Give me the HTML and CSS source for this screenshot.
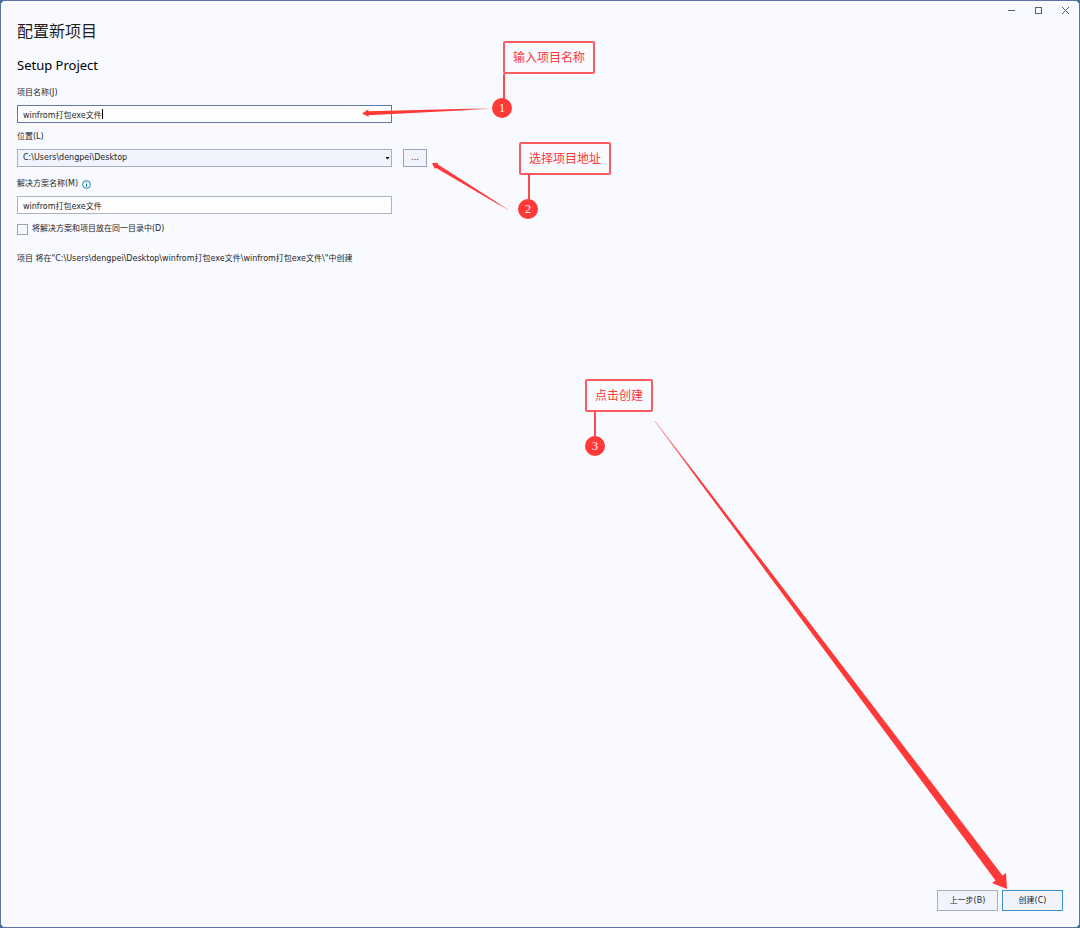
FILE: index.html
```html
<!DOCTYPE html>
<html lang="zh-CN">
<head>
    <meta charset="UTF-8">
    <meta name="viewport" content="width=device-width, initial-scale=1.0">
    <title>配置新项目</title>
    <link rel="stylesheet" href="styles.css">
</head>
<body>
    <div class="window">
        <header class="titlebar">
            <button class="win-btn" type="button" aria-label="最小化">
                <svg width="9" height="9" viewBox="0 0 9 9"><path d="M1 4.5h7"/></svg>
            </button>
            <button class="win-btn" type="button" aria-label="最大化">
                <svg width="9" height="9" viewBox="0 0 9 9"><rect x="1.5" y="1.5" width="6" height="6"/></svg>
            </button>
            <button class="win-btn" type="button" aria-label="关闭">
                <svg width="9" height="9" viewBox="0 0 9 9"><path d="M1 1l7 7M8 1l-7 7"/></svg>
            </button>
        </header>
        <form class="content">
            <h1>配置新项目</h1>
            <h2>Setup Project</h2>
            <div class="field">
                <label for="name">项目名称(J)</label>
                <div class="control">
                    <input class="box active" type="text" id="name" value="winfrom打包exe文件">
                    <span class="caret"></span>
                </div>
            </div>
            <div class="field location">
                <label for="location">位置(L)</label>
                <div class="row">
                    <div class="control">
                        <select class="box" id="location">
                            <option>C:\Users\dengpei\Desktop</option>
                        </select>
                        <svg class="arrow" width="5" height="3" viewBox="0 0 5 3"><path d="M.5 0h4L2.5 2.5z"/></svg>
                    </div>
                    <button class="browse" type="button">...</button>
                </div>
            </div>
            <div class="field">
                <label for="solution">解决方案名称(M)
                    <svg class="info" width="9" height="9" viewBox="0 0 9 9">
                        <circle cx="4.5" cy="4.5" r="3.9"/>
                        <path d="M4.5 2v1M4.5 3.8v3.2"/>
                    </svg>
                </label>
                <div class="control">
                    <input class="box" type="text" id="solution" value="winfrom打包exe文件">
                </div>
            </div>
            <label class="check"><input type="checkbox">将解决方案和项目放在同一目录中(D)</label>
            <p class="summary">项目 将在"C:\Users\dengpei\Desktop\winfrom打包exe文件\winfrom打包exe文件\"中创建</p>
        </form>
        <footer class="footer">
            <button type="button">上一步(B)</button>
            <button class="primary" type="button">创建(C)</button>
        </footer>
    </div>

    <!-- step notes on top of the dialog -->
    <svg class="pointer pointer-1" width="128" height="12" viewBox="0 0 128 12">
        <defs>
            <linearGradient id="fade1" x1="1" x2="0" y1="0" y2="0">
                <stop offset="0" stop-color="#ff3838" stop-opacity="0.3"/>
                <stop offset="0.2" stop-color="#ff3838"/>
            </linearGradient>
        </defs>
        <path fill="url(#fade1)" d="M0 6.5L6.5 2.2L6.2 4.2L127 1.2V2L6.2 8.2L7 10z"/>
    </svg>
    <svg class="pointer pointer-2" width="78" height="50" viewBox="0 0 78 50">
        <defs>
            <linearGradient id="fade2" x1="1" x2="0" y1="1" y2="0">
                <stop offset="0" stop-color="#ff3838" stop-opacity="0.3"/>
                <stop offset="0.2" stop-color="#ff3838"/>
            </linearGradient>
        </defs>
        <path fill="url(#fade2)" d="M0 1L6 1L5.6 2.3L77 48L76.6 48.6L3.8 5.8L2.8 7z"/>
    </svg>
    <svg class="pointer pointer-3" width="354" height="470" viewBox="0 0 354 470">
        <defs>
            <linearGradient id="fade3" x1="0" x2="1" y1="0" y2="1">
                <stop offset="0" stop-color="#ff3838" stop-opacity="0.4"/>
                <stop offset="0.12" stop-color="#ff3838"/>
            </linearGradient>
        </defs>
        <path fill="url(#fade3)" d="M1.4 1L348.5 455.5L352 453L353 469L338 463L341.5 460.5L0.6 1.6z"/>
    </svg>
    <div class="note note-1"><p>输入项目名称</p><b>1</b></div>
    <div class="note note-2"><p>选择项目地址</p><b>2</b></div>
    <div class="note note-3"><p>点击创建</p><b>3</b></div>
</body>
</html>
```
FILE: styles.css
```css
* {
    box-sizing: border-box;
}
body {
    position: relative;
    margin: 0;
    background: #3f7189;
    color: #1e1e1e;
    font-family: "DejaVu Sans", "Noto Sans CJK SC", sans-serif;
    font-size: 8px;
    line-height: 12px;
}
.window {
    display: flex;
    flex-direction: column;
    min-height: 100vh;
    border: 1px solid #5d73a5;
    border-radius: 5px;
    background: #f8faff;
}
h1, h2, p {
    margin: 0;
}
button, input, select {
    margin: 0;
    color: inherit;
    font: inherit;
}
.titlebar {
    display: flex;
    justify-content: flex-end;
}
.win-btn {
    display: flex;
    align-items: center;
    justify-content: center;
    width: 27px;
    height: 18px;
    padding: 0;
    border: none;
    background: none;
}
.win-btn svg {
    fill: none;
    stroke: #56607a;
}
.content {
    flex: 1;
    padding: 0 16px;
}
h1, h2 {
    font-family: "Noto Sans", "Noto Sans CJK SC", sans-serif;
    font-weight: 400;
    line-height: 24px;
}
h1 {
    font-size: 16px;
}
h2 {
    margin-top: 10px;
    color: #000;
    font-size: 13px;
}
.field {
    display: flex;
    flex-direction: column;
    gap: 6px;
    margin-top: 10px;
}
.field + .field {
    margin-top: 8px;
}
.field.location + .field {
    margin-top: 11px;
}
.field label {
    display: flex;
    align-items: center;
    gap: 4px;
}
.info {
    fill: none;
    stroke: #1b86ab;
}
.row {
    display: flex;
    gap: 11px;
}
.control {
    position: relative;
    width: 375px;
}
.box {
    display: block;
    width: 100%;
    height: 18px;
    padding: 0 5px;
    border: 1px solid #adb4c2;
    border-radius: 0;
    outline: none;
    background: #fdfdfd;
}
.box.active {
    border-color: #6078aa;
}
select.box {
    appearance: none;
    border-color: #a5afbf;
    background: #f1f4fd;
}
.caret {
    position: absolute;
    top: 4px;
    left: 85px;
    width: 1px;
    height: 10px;
    background: #000;
}
.arrow {
    position: absolute;
    top: 8px;
    right: 2px;
    pointer-events: none;
}
.browse {
    width: 24px;
    height: 18px;
    padding: 0;
    border: 1px solid #9ba5b7;
    background: #f1f4fd;
}
.check {
    display: flex;
    align-items: center;
    gap: 4px;
    margin-top: 9px;
}
.check input {
    appearance: none;
    width: 11px;
    height: 11px;
    border: 1px solid #98a3b5;
    background: #f6f8fe;
}
.summary {
    margin-top: 18px;
}
.footer {
    display: flex;
    justify-content: flex-end;
    gap: 4px;
    padding: 16px;
}
.footer button {
    width: 61px;
    height: 21px;
    padding: 0;
    border: 1px solid #a5afbf;
    background: #f1f4fd;
}
.footer .primary {
    border-color: #3e91cb;
}
.pointer {
    position: absolute;
    pointer-events: none;
}
.pointer-1 {
    top: 107px;
    left: 362px;
}
.pointer-2 {
    top: 162px;
    left: 432px;
}
.pointer-3 {
    top: 420px;
    left: 654px;
}
.note {
    position: absolute;
    color: #ff3838;
}
.note p {
    padding: 0 8px 2px;
    border: 2px solid #fc5c60;
    border-radius: 2px;
    font-family: "Noto Sans CJK SC", sans-serif;
    font-size: 12px;
    line-height: 27px;
}
.note b {
    position: absolute;
    top: 57px;
    width: 20px;
    height: 20px;
    border-radius: 50%;
    background: #ff3838;
    color: #fff;
    font: 12px/20px "Liberation Serif", serif;
    text-align: center;
}
/* line from the box down to the number */
.note::after {
    content: "";
    position: absolute;
    top: 33px;
    width: 2px;
    height: 25px;
    background: #fa4a4e;
}
.note-1 {
    top: 41px;
    left: 503px;
}
.note-1 b {
    left: -11px;
}
.note-1::after {
    left: 0;
}
.note-2 {
    top: 142px;
    left: 519px;
}
.note-2 b {
    left: -1px;
}
.note-2::after {
    left: 9px;
}
.note-3 {
    top: 379px;
    left: 585px;
}
.note-3 b {
    left: 0;
}
.note-3::after {
    left: 9px;
}
```
